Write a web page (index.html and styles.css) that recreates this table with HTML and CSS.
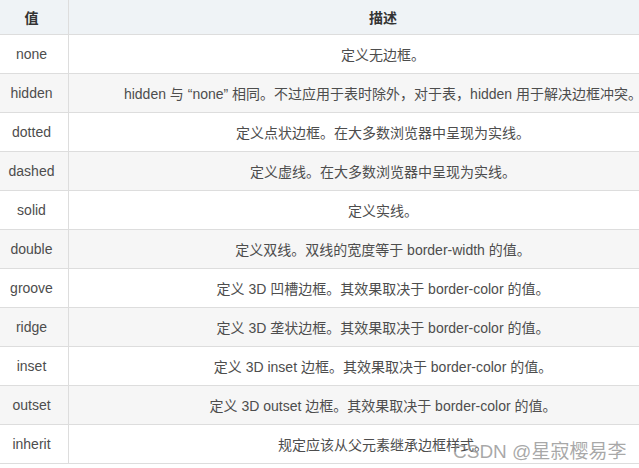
FILE: index.html
```html
<!DOCTYPE html>
<html>
<head>
<meta charset="utf-8">
<link rel="stylesheet" href="styles.css">
</head>
<body>
<div class="page">
<table class="tbl">
<thead>
<tr><th class="c1">值</th><th class="c2">描述</th></tr>
</thead>
<tbody>
<tr><td>none</td><td>定义无边框。</td></tr>
<tr><td>hidden</td><td>hidden 与 “none” 相同。不过应用于表时除外，对于表，hidden 用于解决边框冲突。</td></tr>
<tr><td>dotted</td><td>定义点状边框。在大多数浏览器中呈现为实线。</td></tr>
<tr><td>dashed</td><td>定义虚线。在大多数浏览器中呈现为实线。</td></tr>
<tr><td>solid</td><td>定义实线。</td></tr>
<tr><td>double</td><td>定义双线。双线的宽度等于 border-width 的值。</td></tr>
<tr><td>groove</td><td>定义 3D 凹槽边框。其效果取决于 border-color 的值。</td></tr>
<tr><td>ridge</td><td>定义 3D 垄状边框。其效果取决于 border-color 的值。</td></tr>
<tr><td>inset</td><td>定义 3D inset 边框。其效果取决于 border-color 的值。</td></tr>
<tr><td>outset</td><td>定义 3D outset 边框。其效果取决于 border-color 的值。</td></tr>
<tr><td>inherit</td><td>规定应该从父元素继承边框样式。</td></tr>
</tbody>
</table>
<div class="watermark">CSDN @星寂樱易李</div>
</div>
</body>
</html>
```
FILE: styles.css
```css
html, body {
  margin: 0;
  padding: 0;
  background: #ffffff;
  overflow: hidden;
}
.page {
  position: relative;
  width: 639px;
  height: 468px;
  overflow: hidden;
}
.tbl {
  border-collapse: collapse;
  margin-left: -6px;
  width: 704px;
  table-layout: fixed;
  font-family: "Liberation Sans", Arial, "Noto Sans CJK SC", sans-serif;
  font-size: 14px;
  color: #4d4d4d;
}
.tbl th, .tbl td {
  border: 1px solid #dddddd;
  text-align: center;
  padding: 0 8px;
  white-space: nowrap;
}
.tbl th {
  height: 34px;
  background: #eff3f6;
  font-weight: bold;
  color: #333333;
}
.tbl td {
  height: 38px;
}
.tbl thead tr th {
  border-top: none;
}
.c1 { width: 57px; }
.tbl tbody tr:nth-child(even) td {
  background: #f6f6f6;
}
.watermark {
  position: absolute;
  left: 453px;
  top: 436px;
  font-family: "Liberation Sans", Arial, "Noto Sans CJK SC", sans-serif;
  font-size: 19px;
  color: rgba(140, 140, 140, 0.75);
  white-space: nowrap;
}
```
